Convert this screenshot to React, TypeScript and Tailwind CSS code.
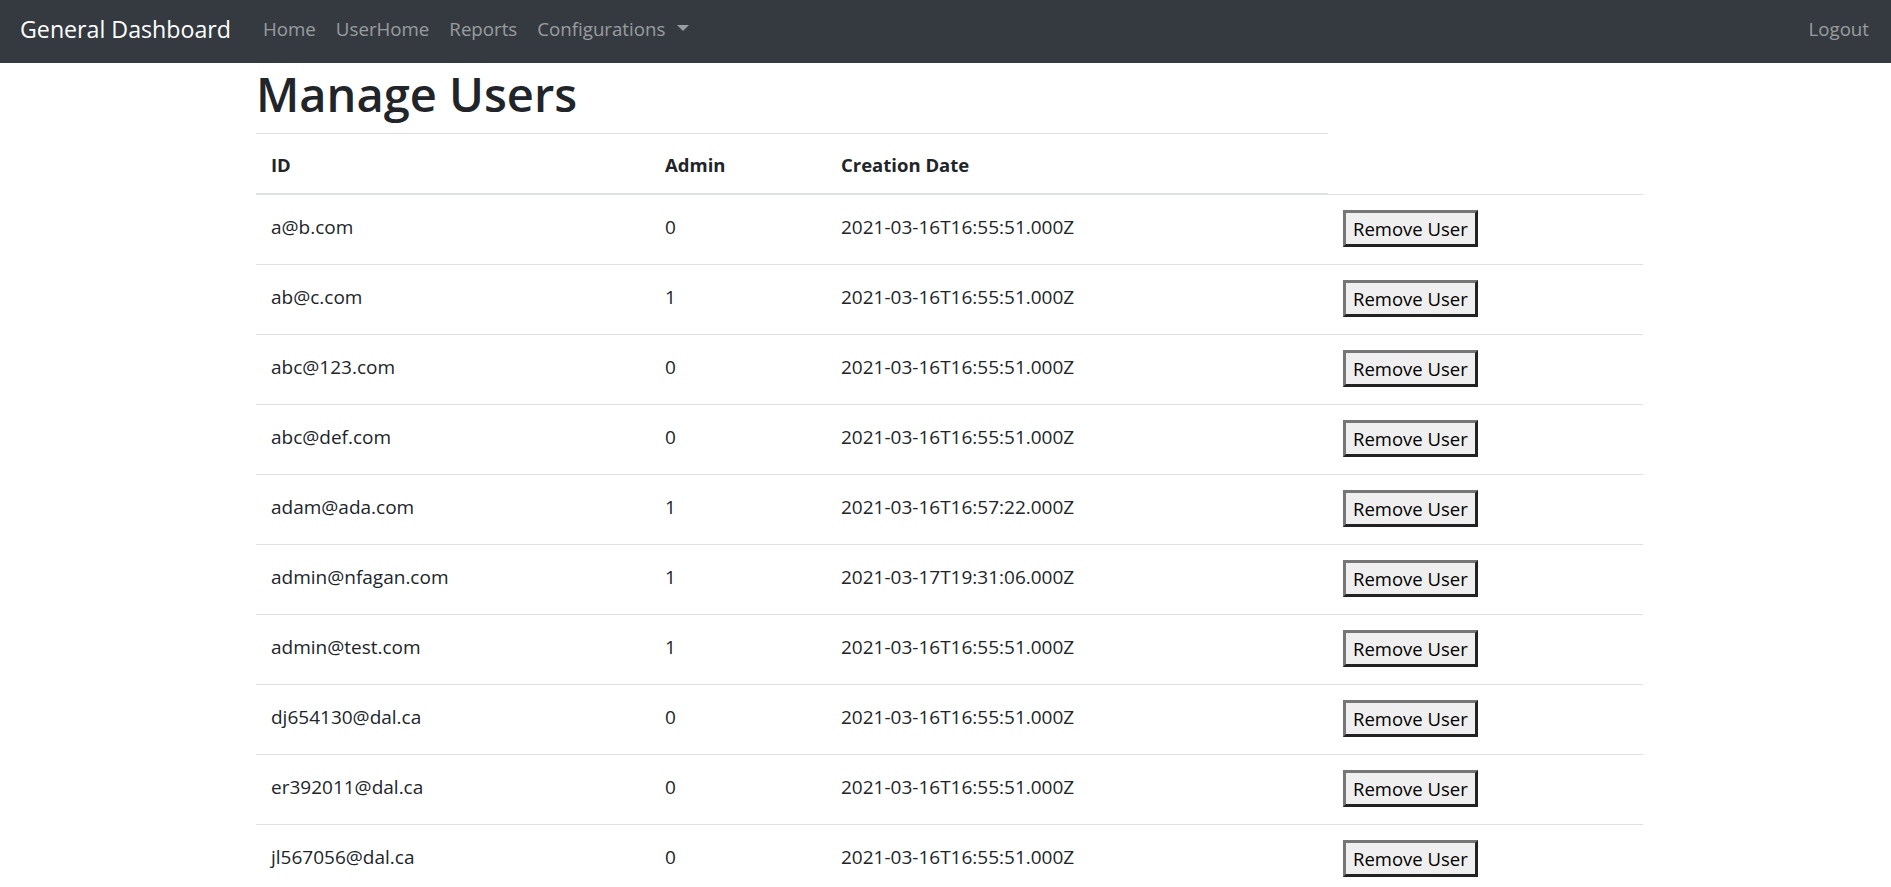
const users = [
  { id: "a@b.com", admin: 0, created: "2021-03-16T16:55:51.000Z" },
  { id: "ab@c.com", admin: 1, created: "2021-03-16T16:55:51.000Z" },
  { id: "abc@123.com", admin: 0, created: "2021-03-16T16:55:51.000Z" },
  { id: "abc@def.com", admin: 0, created: "2021-03-16T16:55:51.000Z" },
  { id: "adam@ada.com", admin: 1, created: "2021-03-16T16:57:22.000Z" },
  { id: "admin@nfagan.com", admin: 1, created: "2021-03-17T19:31:06.000Z" },
  { id: "admin@test.com", admin: 1, created: "2021-03-16T16:55:51.000Z" },
  { id: "dj654130@dal.ca", admin: 0, created: "2021-03-16T16:55:51.000Z" },
  { id: "er392011@dal.ca", admin: 0, created: "2021-03-16T16:55:51.000Z" },
  { id: "jl567056@dal.ca", admin: 0, created: "2021-03-16T16:55:51.000Z" },
];

const navLinks = ["Home", "UserHome", "Reports"];

function Navbar() {
  return (
    <nav className="flex h-[63px] items-center bg-[#343a40] pb-[5px] pl-[20px] pr-[12px]">
      <a href="#" className="mr-[22px] text-[23.2px] leading-[38px] text-white">
        General Dashboard
      </a>
      {navLinks.map((link) => (
        <a key={link} href="#" className="px-[10px] text-[18.7px] leading-[30px] text-white/50">
          {link}
        </a>
      ))}
      <a href="#" className="flex items-center px-[10px] text-[18.7px] leading-[30px] text-white/50">
        Configurations
        <span className="mb-[3px] ml-[12px] h-0 w-0 border-x-[6px] border-t-[6px] border-x-transparent border-t-[#9a9da0]" />
      </a>
      <a href="#" className="ml-auto px-[10px] text-[18.7px] leading-[30px] text-white/50">
        Logout
      </a>
    </nav>
  );
}

export default function App() {
  return (
    <div className="min-h-screen bg-white font-['Open_Sans',sans-serif] text-[#212529]">
      <Navbar />

      <main className="ml-[256px] w-[1387px]">
        <h1 className="mb-[9px] pt-[1px] text-[47px] font-semibold leading-[60px]">Manage Users</h1>

        <table className="w-[1387px] table-fixed border-separate border-spacing-0">
          <colgroup>
            <col className="w-[394px]" />
            <col className="w-[176px]" />
            <col className="w-[502px]" />
            <col className="w-[315px]" />
          </colgroup>
          {/* Header only has three cells, the action column is unlabeled */}
          <thead>
            <tr>
              <th className="border-y border-[#dee2e6] pb-[13px] pl-[15px] pt-[16px] text-left align-top text-[18.5px] font-bold leading-[30px]">
                ID
              </th>
              <th className="border-y border-[#dee2e6] pb-[13px] pl-[15px] pt-[16px] text-left align-top text-[18.5px] font-bold leading-[30px]">
                Admin
              </th>
              <th className="border-y border-[#dee2e6] pb-[13px] pl-[15px] pt-[16px] text-left align-top text-[18.5px] font-bold leading-[30px]">
                Creation Date
              </th>
            </tr>
          </thead>

          <tbody>
            {users.map((user) => (
              <tr key={user.id}>
                <td className="border-t border-[#dee2e6] pb-[22px] pl-[15px] pt-[17px] align-top text-[19px] leading-[30px]">
                  {user.id}
                </td>
                <td className="border-t border-[#dee2e6] pb-[22px] pl-[15px] pt-[17px] align-top text-[19px] leading-[30px]">
                  {user.admin}
                </td>
                <td className="border-t border-[#dee2e6] pb-[22px] pl-[15px] pt-[17px] align-top text-[19px] leading-[30px]">
                  {user.created}
                </td>
                <td className="border-t border-[#dee2e6] pb-[17px] pl-[15px] pt-[15px] align-top">
                  <button
                    type="button"
                    className="block border-[3px] border-b-[#222222] border-l-[#767676] border-r-[#222222] border-t-[#767676] bg-[#efefef] px-[7px] py-[1px] text-[18.5px] leading-[29px] text-black"
                  >
                    Remove User
                  </button>
                </td>
              </tr>
            ))}
          </tbody>
        </table>
      </main>
    </div>
  );
}
